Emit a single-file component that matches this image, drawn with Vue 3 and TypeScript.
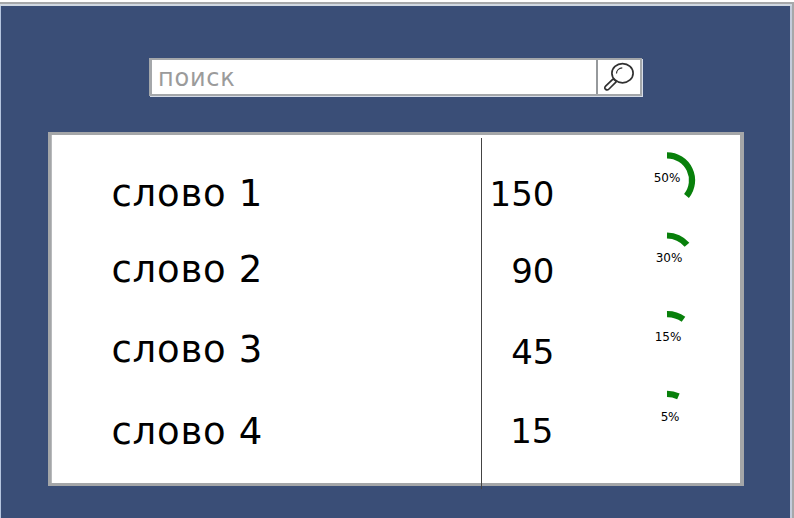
<script setup lang="ts">
interface Entry {
  word: string
  count: number
  percent: number
  arc: string
}

const entries: Entry[] = [
  { word: 'слово 1', count: 150, percent: 50, arc: 'M27 15.3A25 25 0 0 1 46.5 56' },
  { word: 'слово 2', count: 90, percent: 30, arc: 'M27 15.5A27 27 0 0 1 47 24.8' },
  { word: 'слово 3', count: 45, percent: 15, arc: 'M27 15.2A28 28 0 0 1 43.5 20.3' },
  { word: 'слово 4', count: 15, percent: 5, arc: 'M27 14.9A28 28 0 0 1 38.4 17.3' },
]
</script>

<template>
  <main class="window">
    <form class="search" @submit.prevent>
      <div class="field">поиск</div>
      <button class="button" type="submit">
        <svg width="42" height="35" viewBox="0 0 42 35" fill="none" stroke="#303030">
          <ellipse cx="24.5" cy="13.2" rx="10.6" ry="9.6" stroke-width="1.7" />
          <path d="M18.5 13.4c0-3 2.5-5.3 5.8-5.5" stroke-width="1.2" />
          <path d="m15.2 18.9-7.6 7.3c-2.4 2.3 1.1 5 3.4 2.8l7.4-7.3" stroke-width="1.7" />
          <path d="m15 18.9 3.5 2.9" stroke-width="1.3" />
        </svg>
      </button>
    </form>

    <section class="card">
      <div class="words">
        <div v-for="e in entries" :key="e.word" class="word">{{ e.word }}</div>
      </div>
      <div class="counts">
        <div v-for="e in entries" :key="e.word" class="count">{{ e.count }}</div>
      </div>
      <div class="charts">
        <div v-for="e in entries" :key="e.word" class="chart">
          <svg width="64" height="80" viewBox="0 0 64 80">
            <path :d="e.arc" fill="none" stroke="#08800b" stroke-width="6.2" />
          </svg>
          <span class="percent">{{ e.percent }}%</span>
        </div>
      </div>
    </section>
  </main>
</template>

<style>
body {
  margin: 0;
  background: #fff;
}
</style>

<style scoped>
.window {
  box-sizing: border-box;
  width: 794px;
  height: 516px;
  overflow: hidden;
  padding: 54px 0 0 48px;
  background: #3a4e77;
  border: solid #a6a8aa;
  border-width: 2px 2px 0 0;
  box-shadow: inset 0 2px #d0d8e2, inset -2px 0 #c4cbdc, inset 1px 0 #b5c5df;
  margin-top: 2px;
  font-family: Verdana, "DejaVu Sans", sans-serif;
  color: #000;
}

.search {
  box-sizing: border-box;
  display: flex;
  width: 493px;
  height: 38px;
  margin: 0 0 0 101px;
  background: #fff;
  border: solid #a4a7aa;
  border-width: 2px 2px 2px 3px;
  box-shadow: 1px 1px #d5dce8;
}

.field {
  flex: 1;
  padding-left: 6px;
  font-size: 24px;
  line-height: 37px;
  letter-spacing: 0.8px;
  color: #9b9b9b;
}

.button {
  width: 44px;
  padding: 0;
  background: #fff;
  border: 0;
  border-left: 2px solid #96999c;
}

.button svg {
  display: block;
}

.card {
  box-sizing: border-box;
  display: grid;
  grid-template-columns: 430px 78px 1fr;
  width: 696px;
  height: 354px;
  margin-top: 36px;
  background: #fff;
  border: solid #a4a6a8;
  border-width: 3px 4px 3px 3px;
  box-shadow: inset 1px 0 #b8babc;
}

.words {
  padding: 19px 0 0 60.5px;
  font-size: 37px;
  line-height: 80px;
  letter-spacing: 0.75px;
  white-space: nowrap;
}

.word {
  height: 80px;
}

.word:first-child {
  height: 76px;
}

.word:nth-child(3) {
  height: 82px;
}

.counts {
  box-sizing: border-box;
  height: 351px;
  margin-top: 3px;
  padding: 16px 4.5px 0 0;
  border-left: 1px solid #444;
  font-size: 34px;
  line-height: 80px;
  text-align: right;
}

.count {
  height: 80px;
}

.count:first-child {
  height: 77px;
}

.count:nth-child(2) {
  height: 81px;
}

.count:nth-child(3) {
  height: 79px;
}

.count:last-child {
  padding-right: 1px;
}

.charts {
  padding: 5px 0 0 81px;
}

.chart {
  position: relative;
  width: 64px;
  height: 79.7px;
}

.chart svg {
  display: block;
}

.percent {
  position: absolute;
  top: 30px;
  left: 0;
  width: 54px;
  font-size: 12px;
  line-height: 16px;
  text-align: center;
}

.chart:nth-child(2) .percent {
  left: 2px;
}

.chart:nth-child(3) .percent {
  left: 1px;
}

.chart:nth-child(4) .percent {
  left: 3px;
  letter-spacing: -0.3px;
}
</style>
